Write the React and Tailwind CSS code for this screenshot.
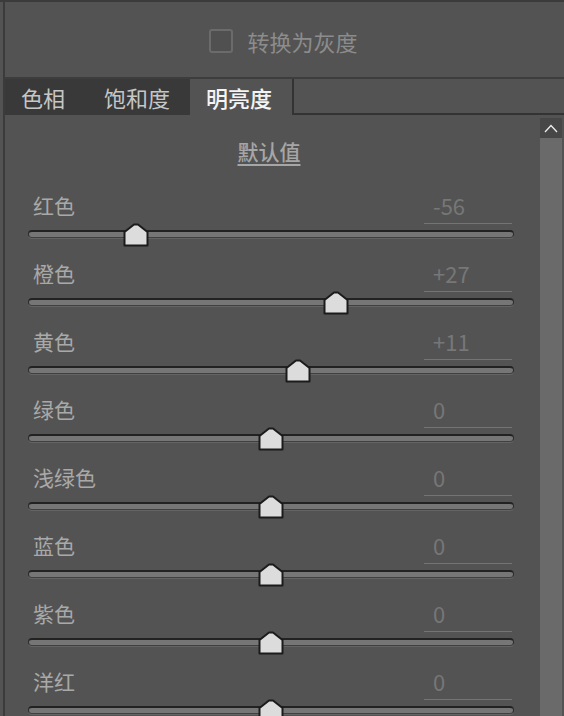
import React from "react";

const rows = [
  { label: "红色", value: -56 },
  { label: "橙色", value: 27 },
  { label: "黄色", value: 11 },
  { label: "绿色", value: 0 },
  { label: "浅绿色", value: 0 },
  { label: "蓝色", value: 0 },
  { label: "紫色", value: 0 },
  { label: "洋红", value: 0 },
];

const fmt = (v) => (v > 0 ? `+${v}` : `${v}`);

// ── Slider thumb (house shape) ───────────────────────────────
function Thumb({ value }) {
  const center = 243 + value * 2.41;
  return (
    <svg
      width="26"
      height="24"
      viewBox="0 0 26 24"
      className="absolute top-[33px]"
      style={{ left: center - 13 }}
    >
      <polygon
        points="1.5,22.5 1.5,9 11,1.5 15,1.5 24.5,9 24.5,22.5"
        fill="#dcdcdc"
        stroke="#1b1b1b"
        strokeWidth="2"
        strokeLinejoin="round"
      />
    </svg>
  );
}

// ── One adjustment row ───────────────────────────────────────
function SliderRow({ label, value }) {
  return (
    <div className="relative h-[68px] ml-[23px] w-[486px]">
      <div className="flex justify-between h-[34px]">
        <span className="pl-[5px] leading-[30px] text-[21px] text-[#a9a9a9]">{label}</span>
        <div className="w-[88px] mr-[2px] h-[34px] border-b border-[#747474]">
          <span className="block pl-[9px] leading-[30px] text-[22px] text-[#777777]">{fmt(value)}</span>
        </div>
      </div>
      <div className="mt-[6px] h-[8px] rounded-full bg-[#767676] border border-[#2a2a2a] border-t-2 border-t-[#222222] border-b-[#404040] shadow-[0_1px_0_#646464]" />
      <Thumb value={value} />
    </div>
  );
}

export default function App() {
  return (
    <div
      className="w-[564px] h-[716px] overflow-hidden bg-[#535353] border-t-2 border-[#3b3b3b] pl-[3px]"
      style={{ fontFamily: '"Noto Sans CJK SC", "Noto Sans", sans-serif' }}
    >
      <div className="h-full border-l-2 border-[#3b3b3b] flex flex-col">
        {/* Grayscale toggle */}
        <div className="h-[77px] shrink-0 pt-[3px] flex items-center justify-center gap-[14px] border-b-2 border-[#3d3d3d] pr-[2px]">
          <div className="w-[24px] h-[24px] rounded-[3px] border-2 border-[#6b6b6b] bg-[#505050]" />
          <span className="text-[22px] text-[#8c8c8c] leading-none">转换为灰度</span>
        </div>

        {/* Tabs */}
        <div className="flex h-[36px] shrink-0">
          <div className="w-[87px] bg-[#393939] pl-[16px] flex items-center text-[22px] text-[#c6c6c6]">色相</div>
          <div className="w-[98px] bg-[#393939] pl-[12px] flex items-center text-[22px] text-[#c6c6c6]">饱和度</div>
          <div className="w-[104px] border-r-2 border-[#333333] pl-[16px] flex items-center text-[22px] font-medium text-[#f4f4f4]">
            明亮度
          </div>
          <div className="flex-1 border-b-2 border-[#333333]" />
        </div>

        {/* Body */}
        <div className="flex flex-1 min-h-0">
          <div className="flex-1">
            <div className="pt-[21px] pr-[7px] flex justify-center">
              <span className="leading-[30px] text-[21px] font-medium text-[#a6a6a6] underline underline-offset-4">
                默认值
              </span>
            </div>
            <div className="mt-[24px]">
              {rows.map((r) => (
                <SliderRow key={r.label} label={r.label} value={r.value} />
              ))}
            </div>
          </div>

          {/* Scrollbar */}
          <div className="w-[22px] mr-[2px] mt-[3px] flex flex-col">
            <div className="h-[20px] bg-[#474747] flex items-center justify-center">
              <svg width="14" height="9" viewBox="0 0 14 9">
                <polyline points="1,8 7,1.5 13,8" fill="none" stroke="#ececec" strokeWidth="1.3" />
              </svg>
            </div>
            <div className="flex-1 bg-[#6a6a6a]" />
          </div>
        </div>
      </div>
    </div>
  );
}
